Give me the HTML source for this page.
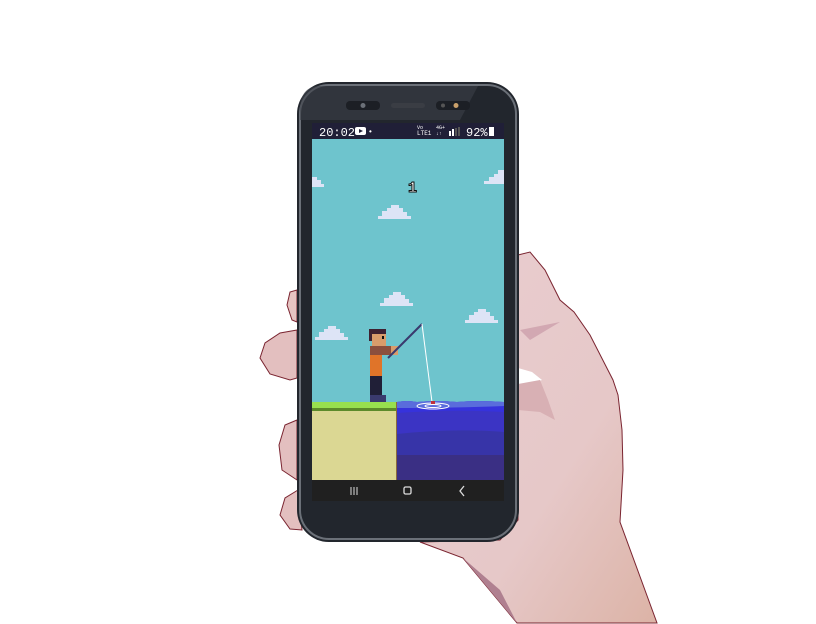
<!DOCTYPE html>
<html><head><style>
html,body{margin:0;padding:0;background:#fff;width:816px;height:624px;overflow:hidden}
svg{display:block}
text{font-family:"Liberation Mono",monospace}
</style></head><body>
<svg width="816" height="624" viewBox="0 0 816 624">
<defs>
<linearGradient id="hg" x1="0" y1="0" x2="1" y2="1">
<stop offset="0" stop-color="#e9cdd0"/><stop offset="0.6" stop-color="#e6c8c8"/><stop offset="1" stop-color="#dcb3a6"/>
</linearGradient>
<g id="cl"><path d="M0 14 h9 v-3 h4 v-5 h5 v-3 h4 v-3 h8 v3 h4 v4 h4 v4 h4 v3 h3 z" fill="#dde4f6"/></g>
</defs>
<!-- hand -->
<path d="M518 255 L530 252 L545 270 L560 300 L574 312 L590 335 L613 380 L618 395 L622 430 L623 470 L620 522 L657 623 L517 623 L463 558 L420 542 L500 540 L518 520 Z" fill="url(#hg)" stroke="#7a2430" stroke-width="1"/>
<path d="M518 368 L532 372 L542 380 L530 384 L518 384 Z" fill="#fff"/>
<path d="M518 384 L540 380 L548 400 L555 420 L540 412 L518 410 Z" fill="#d8b0b4"/>
<path d="M520 330 L560 322 L530 340 Z" fill="#c99aa6" opacity="0.7"/>
<path d="M463 558 L500 590 L517 623 Z" fill="#b08090"/>
<path d="M297 290 L290 292 L287 305 L292 320 L297 322 Z" fill="#e6c4c2" stroke="#7a2430"/>
<path d="M297 330 L280 333 L265 343 L260 358 L270 374 L290 380 L297 378 Z" fill="#e3bfbf" stroke="#7a2430"/>
<path d="M297 420 L285 425 L279 445 L282 470 L297 480 Z" fill="#e3bfbf" stroke="#7a2430"/>
<path d="M298 490 L285 498 L280 515 L290 529 L302 530 Z" fill="#e3bfbf" stroke="#7a2430"/>
<!-- phone -->
<rect x="297" y="82" width="222" height="460" rx="32" fill="#22262d"/>
<rect x="300" y="85" width="216" height="454" rx="29" fill="none" stroke="#6b7078" stroke-width="2"/>
<path d="M320 86 H478 L460 120 H300 V110 Q300 86 320 86Z" fill="#3c4048" opacity="0.6"/>
<rect x="346" y="101" width="34" height="9" rx="4" fill="#1c1f25"/>
<circle cx="363" cy="105.5" r="2.5" fill="#6b7078"/>
<rect x="391" y="103" width="34" height="5" rx="2.5" fill="#3a3d44"/>
<rect x="436" y="101" width="34" height="9" rx="4" fill="#1c1f25"/>
<circle cx="443" cy="105.5" r="2" fill="#555"/>
<circle cx="456" cy="105.5" r="2.5" fill="#c9a06b"/>
<!-- screen -->
<rect x="312" y="123" width="192" height="16" fill="#201f37"/>
<text x="319" y="136" font-size="12" fill="#fff">20:02</text>
<rect x="355" y="127" width="11" height="8" rx="2" fill="#fff"/>
<path d="M359 129 L363 131 L359 133Z" fill="#201f37"/>
<text x="368" y="134" font-size="8" fill="#fff">•</text>
<text x="417" y="129" font-size="5" fill="#fff">Vo</text>
<text x="417" y="135" font-size="6" fill="#fff">LTE1</text>
<text x="436" y="129" font-size="5" fill="#fff">4G+</text>
<text x="436" y="135" font-size="5" fill="#fff">↓↑</text>
<rect x="449" y="131" width="2" height="5" fill="#fff"/><rect x="452" y="129" width="2" height="7" fill="#fff"/><rect x="455" y="128" width="2" height="8" fill="#555"/><rect x="458" y="127" width="2" height="9" fill="#555"/>
<text x="466" y="136" font-size="12" fill="#fff">92%</text>
<rect x="489" y="127" width="5" height="9" fill="#fff"/>
<rect x="312" y="139" width="192" height="264" fill="#6ec4cd"/>
<use href="#cl" x="369" y="205"/>
<use href="#cl" x="371" y="292"/>
<use href="#cl" x="456" y="309"/>
<use href="#cl" x="306" y="326"/>
<path d="M312 187 h12 v-3 h-3 v-4 h-4 v-3 h-5z" fill="#dde4f6"/>
<path d="M504 184 h-20 v-3 h5 v-4 h5 v-3 h4 v-4 h6z" fill="#dde4f6"/>
<text x="408" y="192" font-size="15" font-weight="bold" fill="#fff" stroke="#111" stroke-width="1">1</text>
<!-- fisher -->
<rect x="369" y="329" width="17" height="12" fill="#3e2131"/>
<rect x="372" y="334" width="14" height="12" fill="#d99c6b"/>
<rect x="382" y="336" width="2" height="3" fill="#111"/>
<rect x="370" y="346" width="27" height="9" fill="#8b4f3d"/>
<rect x="391" y="346" width="7" height="9" fill="#d99c6b"/>
<rect x="370" y="355" width="12" height="21" fill="#e07429"/>
<rect x="370" y="376" width="12" height="19" fill="#201f37"/>
<rect x="370" y="395" width="16" height="8" fill="#3a3a6e"/>
<line x1="388" y1="358" x2="422" y2="324" stroke="#3a3a6e" stroke-width="2"/>
<line x1="422" y1="324" x2="432" y2="402" stroke="#fff" stroke-width="1"/>
<!-- ground -->
<rect x="312" y="402" width="85" height="6" fill="#98e04e"/>
<rect x="312" y="408" width="85" height="3" fill="#5c8a2a"/>
<rect x="312" y="411" width="85" height="69" fill="#dbd793"/>
<rect x="396" y="402" width="1" height="78" fill="#8a6a3c"/>
<!-- water -->
<rect x="397" y="402" width="107" height="78" fill="#3a2f84"/>
<path d="M397 402 h107 v53 h-107z" fill="#3734a8"/>
<path d="M397 402 h107 v30 q-50 -4 -107 2z" fill="#3b34c4"/>
<path d="M397 402 q10-2 20 0 q20-2 40 0 q20-2 47 0 v10 q-50-3 -107 1z" fill="#3632dc"/>
<path d="M397 402 q10-2 20 0 q20-2 40 0 q20-2 47 0 v4 q-50 2 -107 2z" fill="#5a6cdc"/>
<ellipse cx="433" cy="406" rx="16" ry="3" fill="none" stroke="#fff"/>
<ellipse cx="433" cy="406" rx="8" ry="1.5" fill="none" stroke="#fff"/>
<rect x="431" y="401" width="4" height="3" fill="#c0303a"/>
<!-- nav -->
<rect x="312" y="480" width="192" height="21" fill="#202020"/>
<path d="M351 487v8M354 487v8M357 487v8" stroke="#ddd" stroke-width="1"/>
<rect x="404" y="487" width="7" height="7" rx="1.5" fill="none" stroke="#ddd" stroke-width="1.3"/>
<path d="M464 486 L460 491 L464 496" fill="none" stroke="#ddd" stroke-width="1.3"/>
</svg>
</body></html>
